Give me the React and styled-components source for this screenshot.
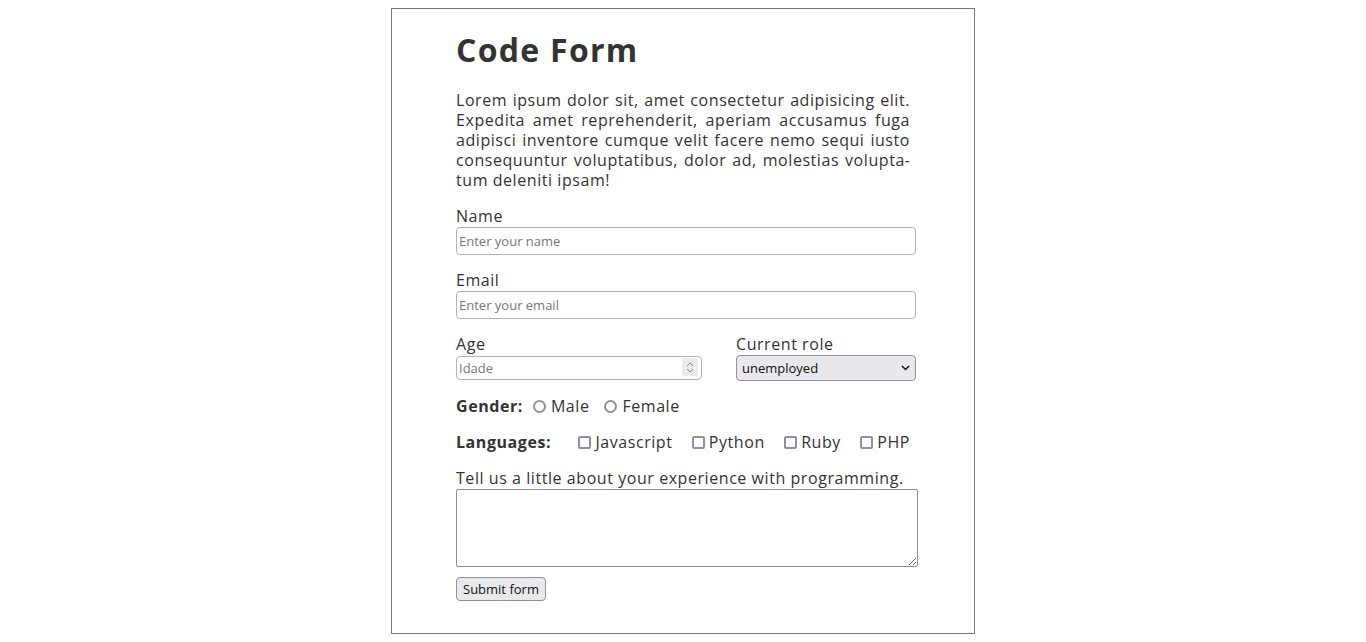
import styled, { createGlobalStyle } from "styled-components";

const GlobalStyle = createGlobalStyle`
  body {
    margin: 8px;
    font-family: "Open Sans", "Noto Sans", sans-serif;
    color: #333;
    background: #fff;
  }
`;

const Card = styled.div`
  width: 454px;
  margin: 0 auto;
  padding: 0 64px 32px;
  border: 1px solid #767676;
  letter-spacing: 0.035em;
`;

const Title = styled.h1`
  margin: 21px 0;
  font-size: 32px;
  line-height: 39px;
  font-weight: 700;
  letter-spacing: 0.04em;
  color: #333;
`;

const Intro = styled.p`
  margin: 0 0 16px;
  font-size: 16px;
  line-height: 20px;
  text-align: justify;
`;

const Field = styled.div`
  display: flex;
  flex-direction: column;
  align-items: flex-start;
  margin-bottom: ${(p) => (p.last ? 0 : 15)}px;
`;

const Label = styled.label`
  font-size: 16px;
  line-height: 21px;
`;

const TextInput = styled.input`
  box-sizing: border-box;
  width: ${(p) => p.w || 460}px;
  height: ${(p) => p.h || 28}px;
  margin: 0;
  padding: 0 2px;
  border: 1px solid #b4b4b4;
  border-radius: 4px;
  font-family: "Open Sans", sans-serif;
  font-size: 13px;
  letter-spacing: 0;
  color: #222;
  outline: none;
  &::placeholder { color: #777; }
`;

const Row = styled.div`
  display: grid;
  grid-template-columns: 280px auto;
  margin-bottom: 15px;
`;

const NumberWrap = styled.div`
  position: relative;
  margin-top: 1px;
`;

const Spinner = styled.div`
  position: absolute;
  right: 4px;
  top: 2px;
  width: 16px;
  height: 18px;
  background: #ececef;
  border-radius: 2px;
  display: flex;
  flex-direction: column;
  align-items: center;
  justify-content: center;
  gap: 1px;
`;

const SelectWrap = styled.div`
  position: relative;
`;

const Select = styled.select`
  appearance: none;
  box-sizing: border-box;
  width: 180px;
  height: 26px;
  margin: 0;
  padding: 0 5px;
  background: #e9e9ed;
  border: 1px solid #8f8f9d;
  border-radius: 4px;
  font-family: "Open Sans", sans-serif;
  font-size: 13px;
  color: #111;
`;

const Arrow = styled.svg`
  position: absolute;
  right: 6px;
  top: 10px;
  pointer-events: none;
`;

const OptionRow = styled.div`
  display: flex;
  align-items: center;
  margin-bottom: 16px;
  font-size: 16px;
  line-height: 20px;
  justify-content: ${(p) => (p.spread ? "space-between" : "flex-start")};
  width: ${(p) => (p.spread ? "454px" : "auto")};
`;

const GroupLabel = styled.span`
  font-weight: 700;
  margin-right: ${(p) => p.gap}px;
`;

const Choice = styled.label`
  display: inline-flex;
  align-items: center;
  margin-right: ${(p) => p.gap || 0}px;
`;

const Radio = styled.input.attrs({ type: "radio" })`
  appearance: none;
  box-sizing: border-box;
  width: 13px;
  height: 13px;
  margin: 0 5px 0 0;
  border: 2px solid #8f8f9d;
  border-radius: 50%;
  background: #fff;
`;

const Check = styled.input.attrs({ type: "checkbox" })`
  appearance: none;
  box-sizing: border-box;
  width: 13px;
  height: 13px;
  margin: 0 4px 0 0;
  border: 2px solid #8f8f9d;
  border-radius: 2px;
  background: #fff;
`;

const TextArea = styled.textarea`
  display: block;
  box-sizing: border-box;
  width: 462px;
  height: 78px;
  margin: 0;
  border: 1px solid #8f8f9d;
  border-radius: 2px;
  font-family: "Open Sans", sans-serif;
  font-size: 13px;
`;

const Button = styled.button`
  display: block;
  margin-top: 10px;
  height: 24px;
  padding: 0 6px;
  background: #e9e9ed;
  border: 1px solid #8f8f9d;
  border-radius: 4px;
  font-family: "Open Sans", sans-serif;
  font-size: 13px;
  letter-spacing: 0;
  color: #111;
`;

const Chevron = ({ up }) => (
  <svg width="8" height="5" viewBox="0 0 8 5">
    <path d={up ? "M1 4 L4 1 L7 4" : "M1 1 L4 4 L7 1"} fill="none" stroke="#8a8a94" strokeWidth="1" />
  </svg>
);

export default function App() {
  return (
    <>
      <GlobalStyle />
      <Card>
        <Title>Code Form</Title>
        <Intro lang="en">
          Lorem ipsum dolor sit, amet consectetur adipisicing elit. Expedita amet
          reprehenderit, aperiam accusamus fuga adipisci inventore cumque velit facere
          nemo sequi iusto consequuntur voluptatibus, dolor ad, molestias volupta{"\u00AD"}tum
          deleniti ipsam!
        </Intro>
        <form onSubmit={(e) => e.preventDefault()}>
          <Field>
            <Label htmlFor="name">Name</Label>
            <TextInput id="name" placeholder="Enter your name" />
          </Field>
          <Field>
            <Label htmlFor="email">Email</Label>
            <TextInput id="email" placeholder="Enter your email" />
          </Field>
          <Row>
            <Field last>
              <Label htmlFor="age">Age</Label>
              <NumberWrap>
                <TextInput id="age" w={246} h={24} placeholder="Idade" />
                <Spinner>
                  <Chevron up />
                  <Chevron />
                </Spinner>
              </NumberWrap>
            </Field>
            <Field last>
              <Label htmlFor="role">Current role</Label>
              <SelectWrap>
                <Select id="role" defaultValue="unemployed">
                  <option value="unemployed">unemployed</option>
                  <option value="student">student</option>
                  <option value="developer">developer</option>
                </Select>
                <Arrow width="9" height="6" viewBox="0 0 9 6">
                  <path d="M1 1 L4.5 4.5 L8 1" fill="none" stroke="#111" strokeWidth="1.5" />
                </Arrow>
              </SelectWrap>
            </Field>
          </Row>
          <OptionRow>
            <GroupLabel gap={10}>Gender:</GroupLabel>
            <Choice gap={15}>
              <Radio name="gender" />
              Male
            </Choice>
            <Choice>
              <Radio name="gender" />
              Female
            </Choice>
          </OptionRow>
          <OptionRow spread>
            <GroupLabel gap={8}>Languages:</GroupLabel>
            <Choice><Check />Javascript</Choice>
            <Choice><Check />Python</Choice>
            <Choice><Check />Ruby</Choice>
            <Choice><Check />PHP</Choice>
          </OptionRow>
          <Field last>
            <Label htmlFor="exp">Tell us a little about your experience with programming.</Label>
            <TextArea id="exp" />
          </Field>
          <Button type="submit">Submit form</Button>
        </form>
      </Card>
    </>
  );
}
